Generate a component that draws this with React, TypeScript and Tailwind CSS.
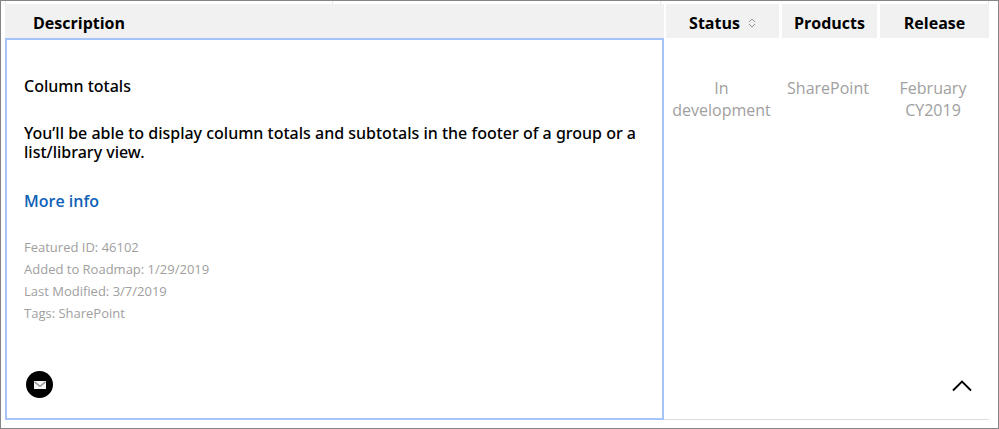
import React, { useState } from 'react';

interface Feature {
  title: string;
  summary: string;
  status: string;
  product: string;
  release: string;
  details: string[];
}

const feature: Feature = {
  title: 'Column totals',
  summary: 'You’ll be able to display column totals and subtotals in the footer of a group or a list/library view.',
  status: 'In development',
  product: 'SharePoint',
  release: 'February CY2019',
  details: [
    'Featured ID: 46102',
    'Added to Roadmap: 1/29/2019',
    'Last Modified: 3/7/2019',
    'Tags: SharePoint',
  ],
};

function SortIcon() {
  return (
    <svg width="8" height="10" viewBox="0 0 8 10" fill="none" stroke="#929292" aria-hidden="true">
      <path d="M1 4L4 1L7 4M1 6L4 9L7 6" />
    </svg>
  );
}

function MailIcon() {
  return (
    <svg width="12" height="8" viewBox="0 0 12 8" aria-hidden="true">
      <rect width="12" height="8" fill="#f5f5f5" />
      <path d="M0.5 0.8L6 5.3L11.5 0.8" fill="none" stroke="#999" strokeWidth="1.5" />
    </svg>
  );
}

function ChevronIcon({ open }: { open: boolean }) {
  return (
    <svg width="20" height="12" viewBox="0 0 20 12" fill="none" stroke="#000" strokeWidth="1.9" aria-hidden="true">
      <path d={open ? 'M1 10.5L10 1.5L19 10.5' : 'M1 1.5L10 10.5L19 1.5'} />
    </svg>
  );
}

export default function App() {
  const [open, setOpen] = useState(true);

  return (
    <main className="min-h-screen border border-[#858585] bg-white pl-1 pr-[9px] font-['Open_Sans','Noto_Sans',sans-serif] text-black">
      <div className="grid h-[3px] grid-cols-3 divide-x divide-[#e8e8e8] border-x border-[#e8e8e8]">
        <span />
        <span />
        <span />
      </div>
      <table className="w-full table-fixed border-separate border-spacing-0">
        <colgroup>
          <col />
          <col className="w-[115px]" />
          <col className="w-[98px]" />
          <col className="w-[112px]" />
        </colgroup>
        <thead>
          <tr className="h-[34px] text-base leading-5 font-bold">
            <th className="bg-[#f1f1f1] pt-1 pb-0 pl-7 text-left">Description</th>
            <th className="border-l-2 border-white bg-[#f1f1f1] bg-clip-padding px-0 pt-1 pb-0">
              <button className="flex w-full items-center justify-center gap-2">
                Status
                <SortIcon />
              </button>
            </th>
            <th className="border-l-3 border-white bg-[#f1f1f1] bg-clip-padding px-0 pt-1 pb-0">Products</th>
            <th className="border-l-3 border-white bg-[#f1f1f1] bg-clip-padding px-0 pt-1 pb-0">Release</th>
          </tr>
        </thead>
        <tbody>
          <tr className="text-center align-top text-base leading-[22px] text-[#a0a0a0]">
            <td rowSpan={2} className="border-2 border-[#a4c4fa] px-[17px] pt-9 pb-5 text-left text-black">
              <div className="font-['Noto_Sans','Open_Sans',sans-serif] font-medium">
                <h2 className="leading-5">{feature.title}</h2>
                <p className="mt-7 leading-[19px]">{feature.summary}</p>
              </div>
              <a href="#more" className="mt-7 block w-fit leading-[22px] font-semibold text-[#0f62b8]">
                More info
              </a>
              {open && (
                <ul className="mt-6 text-[13px] leading-[22px] text-[#a0a0a0]">
                  {feature.details.map((line) => (
                    <li key={line}>{line}</li>
                  ))}
                </ul>
              )}
              <button
                aria-label="Email this feature"
                className="mt-[47px] ml-[2px] flex size-[27px] items-center justify-center rounded-full bg-black"
              >
                <MailIcon />
              </button>
            </td>
            <td className="pt-[39px]">{feature.status}</td>
            <td className="pt-[39px]">{feature.product}</td>
            <td className="pt-[39px]">{feature.release}</td>
          </tr>
          <tr>
            <td colSpan={3} className="border-b border-[#dcdcdc] pr-[17px] pb-[27px] align-bottom">
              <button
                aria-label={open ? 'Collapse' : 'Expand'}
                aria-expanded={open}
                onClick={() => setOpen(!open)}
                className="ml-auto block"
              >
                <ChevronIcon open={open} />
              </button>
            </td>
          </tr>
        </tbody>
      </table>
    </main>
  );
}
